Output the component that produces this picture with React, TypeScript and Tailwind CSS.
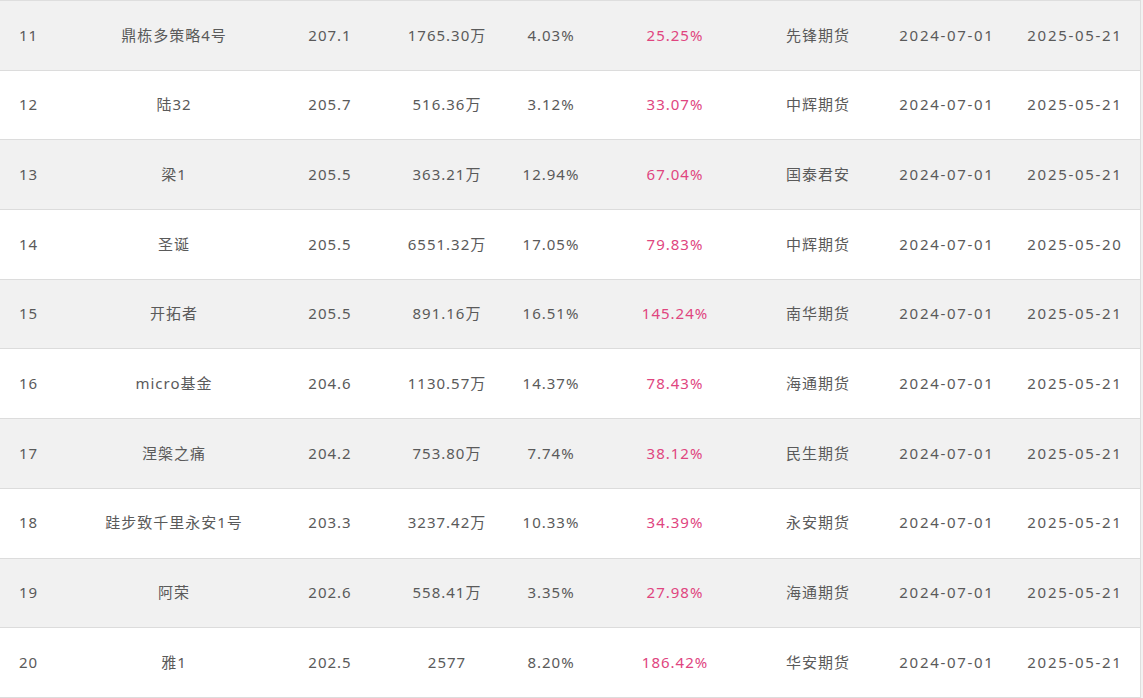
import React from "react";

type Row = [string, string, string, string, string, string, string, string, string];

const rows: Row[] = [
  ["11", "鼎栋多策略4号", "207.1", "1765.30万", "4.03%", "25.25%", "先锋期货", "2024-07-01", "2025-05-21"],
  ["12", "陆32", "205.7", "516.36万", "3.12%", "33.07%", "中辉期货", "2024-07-01", "2025-05-21"],
  ["13", "梁1", "205.5", "363.21万", "12.94%", "67.04%", "国泰君安", "2024-07-01", "2025-05-21"],
  ["14", "圣诞", "205.5", "6551.32万", "17.05%", "79.83%", "中辉期货", "2024-07-01", "2025-05-20"],
  ["15", "开拓者", "205.5", "891.16万", "16.51%", "145.24%", "南华期货", "2024-07-01", "2025-05-21"],
  ["16", "micro基金", "204.6", "1130.57万", "14.37%", "78.43%", "海通期货", "2024-07-01", "2025-05-21"],
  ["17", "涅槃之痛", "204.2", "753.80万", "7.74%", "38.12%", "民生期货", "2024-07-01", "2025-05-21"],
  ["18", "跬步致千里永安1号", "203.3", "3237.42万", "10.33%", "34.39%", "永安期货", "2024-07-01", "2025-05-21"],
  ["19", "阿荣", "202.6", "558.41万", "3.35%", "27.98%", "海通期货", "2024-07-01", "2025-05-21"],
  ["20", "雅1", "202.5", "2577", "8.20%", "186.42%", "华安期货", "2024-07-01", "2025-05-21"],
];

export default function App() {
  return (
    <div
      className="w-[1143px] h-[698px] overflow-hidden bg-[#f2f2f2] text-[15px] tracking-[1px] text-[#5a5a5a]"
      style={{ fontFamily: '"Noto Sans", "Noto Sans CJK SC", sans-serif' }}
    >
      <div className="w-[1141px] border-t border-r border-[#dedede]">
        {rows.map((r, i) => (
          <div
            key={r[0]}
            className={`grid grid-cols-[57px_234px_78px_156px_52px_196px_90px_168px_88px_1fr] h-[69.7px] items-center border-b border-[#dcdcdc] ${
              i % 2 === 0 ? "bg-[#f1f1f1]" : "bg-white"
            }`}
          >
            {r.map((c, j) => (
              <div
                key={j}
                className={`flex justify-center whitespace-nowrap pb-[1px] ${j === 5 ? "text-[#e0457f]" : ""} ${
                  j >= 7 ? "tracking-[1.7px]" : ""
                }`}
              >
                {c}
              </div>
            ))}
            <div />
          </div>
        ))}
      </div>
    </div>
  );
}
